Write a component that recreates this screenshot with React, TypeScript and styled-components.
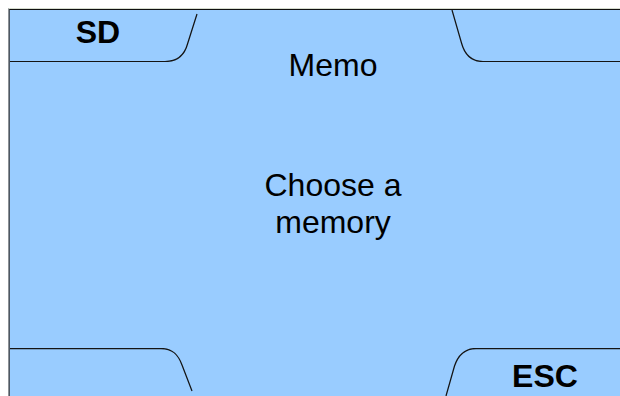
import React from "react";
import styled, { createGlobalStyle } from "styled-components";

const GlobalStyle = createGlobalStyle`
  html, body {
    margin: 0;
    padding: 0;
    overflow: hidden;
    background: #ffffff;
  }
  body {
    padding: 8px 0 0 8px;
    font-family: "Liberation Sans", Arial, sans-serif;
  }
`;

// the display is wider than the window, so the frame crops it
const Frame = styled.div`
  width: 612px;
  height: 388px;
  overflow: hidden;
`;

const Bezel = styled.div`
  border-top: 1px solid #d6dccf;
  border-left: 1px solid #8c9196;
  width: 648px;
  height: 387px;
`;

const Screen = styled.div`
  box-sizing: border-box;
  width: 647px;
  height: 387px;
  border-top: 1px solid #111;
  border-left: 1px solid #4d5863;
  background: #99ccff;
  color: #000;
  display: flex;
  flex-direction: column;
`;

const TabRow = styled.div<{ $height: number }>`
  display: grid;
  grid-template-columns: 190px 1fr 216px;
  height: ${({ $height }) => $height}px;
`;

const Tab = styled.div<{ $col: number; $tall: number }>`
  position: relative;
  grid-row: 1;
  grid-column: ${({ $col }) => $col};
  height: ${({ $tall }) => $tall}px;
  align-self: start;

  svg {
    position: absolute;
    inset: 0;
    pointer-events: none;
  }
`;

const TabLabel = styled.div<{ $top: number; $width: number; $right?: number }>`
  position: relative;
  box-sizing: border-box;
  width: ${({ $width }) => $width}px;
  padding-top: ${({ $top }) => $top}px;
  padding-right: ${({ $right }) => $right ?? 0}px;
  text-align: center;
  font-size: 32px;
  line-height: 37px;
  font-weight: bold;
`;

const Title = styled.div`
  grid-row: 1;
  grid-column: 1 / -1;
  padding-top: 37px;
  text-align: center;
  font-size: 32px;
  line-height: 37px;
`;

const Message = styled.div`
  flex: 1;
  padding-top: 83px;
  display: flex;
  justify-content: center;
`;

const MessageText = styled.div`
  width: 170px;
  text-align: center;
  font-size: 32px;
  line-height: 37px;
`;

const stroke = { fill: "none", stroke: "#141414", strokeWidth: 1.25 };

export default function App() {
  return (
    <>
      <GlobalStyle />
      <Frame>
        <Bezel>
          <Screen>
            <TabRow $height={74}>
              <Tab $col={1} $tall={52}>
                <svg width="190" height="52">
                  <path d="M0 51.5 H155 C168 51.5 174.5 45 177.5 34 L187 4" {...stroke} />
                </svg>
                <TabLabel $top={4} $width={176}>SD</TabLabel>
              </Tab>
              <Title>Memo</Title>
              <Tab $col={3} $tall={52}>
                <svg width="216" height="52">
                  <path d="M12 0 L21.5 33 C24.5 44 31 51.5 43 51.5 H216" {...stroke} />
                </svg>
              </Tab>
            </TabRow>

            <Message>
              <MessageText>Choose a memory</MessageText>
            </Message>

            <TabRow $height={48}>
              <Tab $col={1} $tall={48}>
                <svg width="190" height="48">
                  <path d="M0 0.5 H151 C162 0.5 168 6 172 17 L182 43" {...stroke} />
                </svg>
              </Tab>
              <Tab $col={3} $tall={48}>
                <svg width="216" height="48">
                  <path d="M6 48 L14.5 18 C18.5 6 25 0.5 36 0.5 H216" {...stroke} />
                </svg>
                <TabLabel $top={10} $width={216} $right={6}>ESC</TabLabel>
              </Tab>
            </TabRow>
          </Screen>
        </Bezel>
      </Frame>
    </>
  );
}
